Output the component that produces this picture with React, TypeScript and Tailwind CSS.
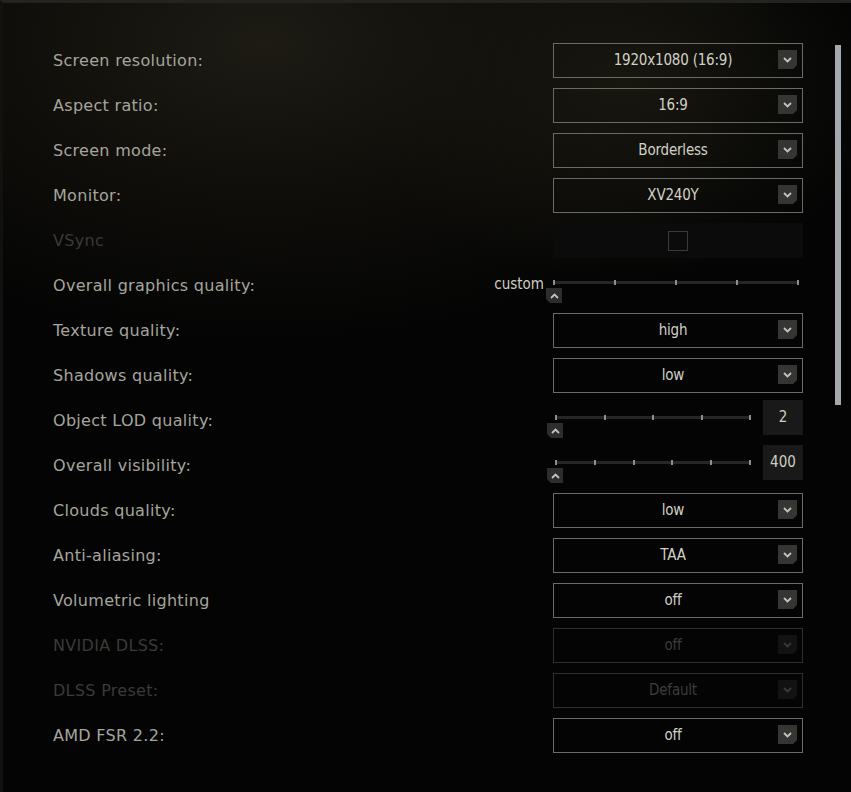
import React from "react";

type Row =
  | { kind: "select"; label: string; value: string; disabled?: boolean }
  | { kind: "check"; label: string }
  | { kind: "preset"; label: string; value: string; ticks: number }
  | { kind: "slider"; label: string; value: string; ticks: number };

const rows: Row[] = [
  { kind: "select", label: "Screen resolution:", value: "1920x1080 (16:9)" },
  { kind: "select", label: "Aspect ratio:", value: "16:9" },
  { kind: "select", label: "Screen mode:", value: "Borderless" },
  { kind: "select", label: "Monitor:", value: "XV240Y" },
  { kind: "check", label: "VSync" },
  { kind: "preset", label: "Overall graphics quality:", value: "custom", ticks: 5 },
  { kind: "select", label: "Texture quality:", value: "high" },
  { kind: "select", label: "Shadows quality:", value: "low" },
  { kind: "slider", label: "Object LOD quality:", value: "2", ticks: 5 },
  { kind: "slider", label: "Overall visibility:", value: "400", ticks: 6 },
  { kind: "select", label: "Clouds quality:", value: "low" },
  { kind: "select", label: "Anti-aliasing:", value: "TAA" },
  { kind: "select", label: "Volumetric lighting", value: "off" },
  { kind: "select", label: "NVIDIA DLSS:", value: "off", disabled: true },
  { kind: "select", label: "DLSS Preset:", value: "Default", disabled: true },
  { kind: "select", label: "AMD FSR 2.2:", value: "off" },
];

const valueFont = { fontFamily: '"DejaVu Sans Condensed", "DejaVu Sans", sans-serif' };

function Chevron({ up, dim }: { up?: boolean; dim?: boolean }) {
  return (
    <svg width="9" height="6" viewBox="0 0 9 6" className={up ? "rotate-180" : ""}>
      <path
        d="M1 1 L4.5 4.5 L8 1"
        fill="none"
        stroke={dim ? "#3a3a38" : "#c4c3bb"}
        strokeWidth="1.8"
      />
    </svg>
  );
}

function Track({ ticks, width }: { ticks: number; width: string }) {
  return (
    <div className={`relative h-[3px] bg-[#262624] ${width}`}>
      <div className="absolute inset-0 flex justify-between">
        {Array.from({ length: ticks }).map((_, i) => (
          <div key={i} className="w-[2px] h-[5px] -mt-[1px] bg-[#8e8e8a]" />
        ))}
      </div>
    </div>
  );
}

function Handle() {
  return (
    <div className="w-[16px] h-[15px] bg-[#2c2d2c] flex items-center justify-center [clip-path:polygon(0_0,100%_0,100%_100%,4px_100%,0_calc(100%-4px))]">
      <Chevron up />
    </div>
  );
}

function Select({ value, disabled }: { value: string; disabled?: boolean }) {
  return (
    <div
      className={`relative w-[250px] h-[35px] border flex items-center justify-center pr-[10px] ${
        disabled ? "border-[#2e2e2c] text-[#3c3c3a]" : "border-[#6a6a66] text-[#d2d1c8]"
      }`}
    >
      <span className="text-[15px] tracking-[-0.2px]" style={valueFont}>
        {value}
      </span>
      <div
        className={`absolute right-[5px] top-[6px] w-[19px] h-[19px] flex items-center justify-center [clip-path:polygon(0_0,100%_0,100%_calc(100%-4px),calc(100%-4px)_100%,0_100%)] ${
          disabled ? "bg-[#121212]" : "bg-[#353634]"
        }`}
      >
        <Chevron dim={disabled} />
      </div>
    </div>
  );
}

function Control({ row }: { row: Row }) {
  if (row.kind === "select") return <Select value={row.value} disabled={row.disabled} />;
  if (row.kind === "check")
    return (
      <div className="w-[250px] h-[35px] bg-[#0b0b0b] flex items-center justify-center">
        <div className="w-[20px] h-[20px] border border-[#3b3b36]" />
      </div>
    );
  if (row.kind === "preset")
    return (
      <div className="relative w-[250px] h-[35px]">
        <span
          className="absolute right-[259px] top-[5px] text-[15px] text-[#cfcec5]"
          style={valueFont}
        >
          {row.value}
        </span>
        <div className="absolute left-0 top-[13px] flex flex-col">
          <Track ticks={row.ticks} width="w-[246px]" />
          <div className="mt-[4px] -ml-[7px]">
            <Handle />
          </div>
        </div>
      </div>
    );
  return (
    <div className="relative w-[250px] h-[35px]">
      <div className="absolute left-[2px] top-[13px] flex flex-col">
        <Track ticks={row.ticks} width="w-[196px]" />
        <div className="mt-[4px] -ml-[8px]">
          <Handle />
        </div>
      </div>
      <div
        className="absolute right-0 -top-[3px] w-[40px] h-[35px] bg-[#191919] flex items-center justify-center text-[15px] text-[#cfcec5]"
        style={valueFont}
      >
        {row.value}
      </div>
    </div>
  );
}

export default function App() {
  return (
    <div
      className="relative w-[851px] h-[792px] overflow-hidden bg-[#040404] border-t-[3px] border-l-[3px] border-t-[#23241f] border-l-[#111110]"
      style={{ fontFamily: '"DejaVu Sans", sans-serif' }}
    >
      <div className="absolute inset-0 bg-[radial-gradient(ellipse_520px_300px_at_260px_40px,#1d1b14_0%,#0f0e0a_50%,transparent_100%)]" />
      <div className="absolute inset-0 bg-[radial-gradient(ellipse_260px_200px_at_620px_80px,#17160f_0%,transparent_100%)]" />
      <div className="absolute right-[10px] top-[42px] w-[6px] h-[360px] bg-[#a4a9ad]" />
      <div className="relative flex flex-col gap-[10px] pt-[40px] pl-[50px] pr-[48px]">
        {rows.map((row, i) => {
          const dim = row.kind === "check" || (row.kind === "select" && row.disabled);
          return (
            <div key={i} className="flex items-center justify-between h-[35px]">
              <span
                className={`text-[16px] tracking-[0.3px] ${
                  dim ? "text-[#3a3a38]" : "text-[#a6a59d]"
                }`}
              >
                {row.label}
              </span>
              <Control row={row} />
            </div>
          );
        })}
      </div>
    </div>
  );
}
